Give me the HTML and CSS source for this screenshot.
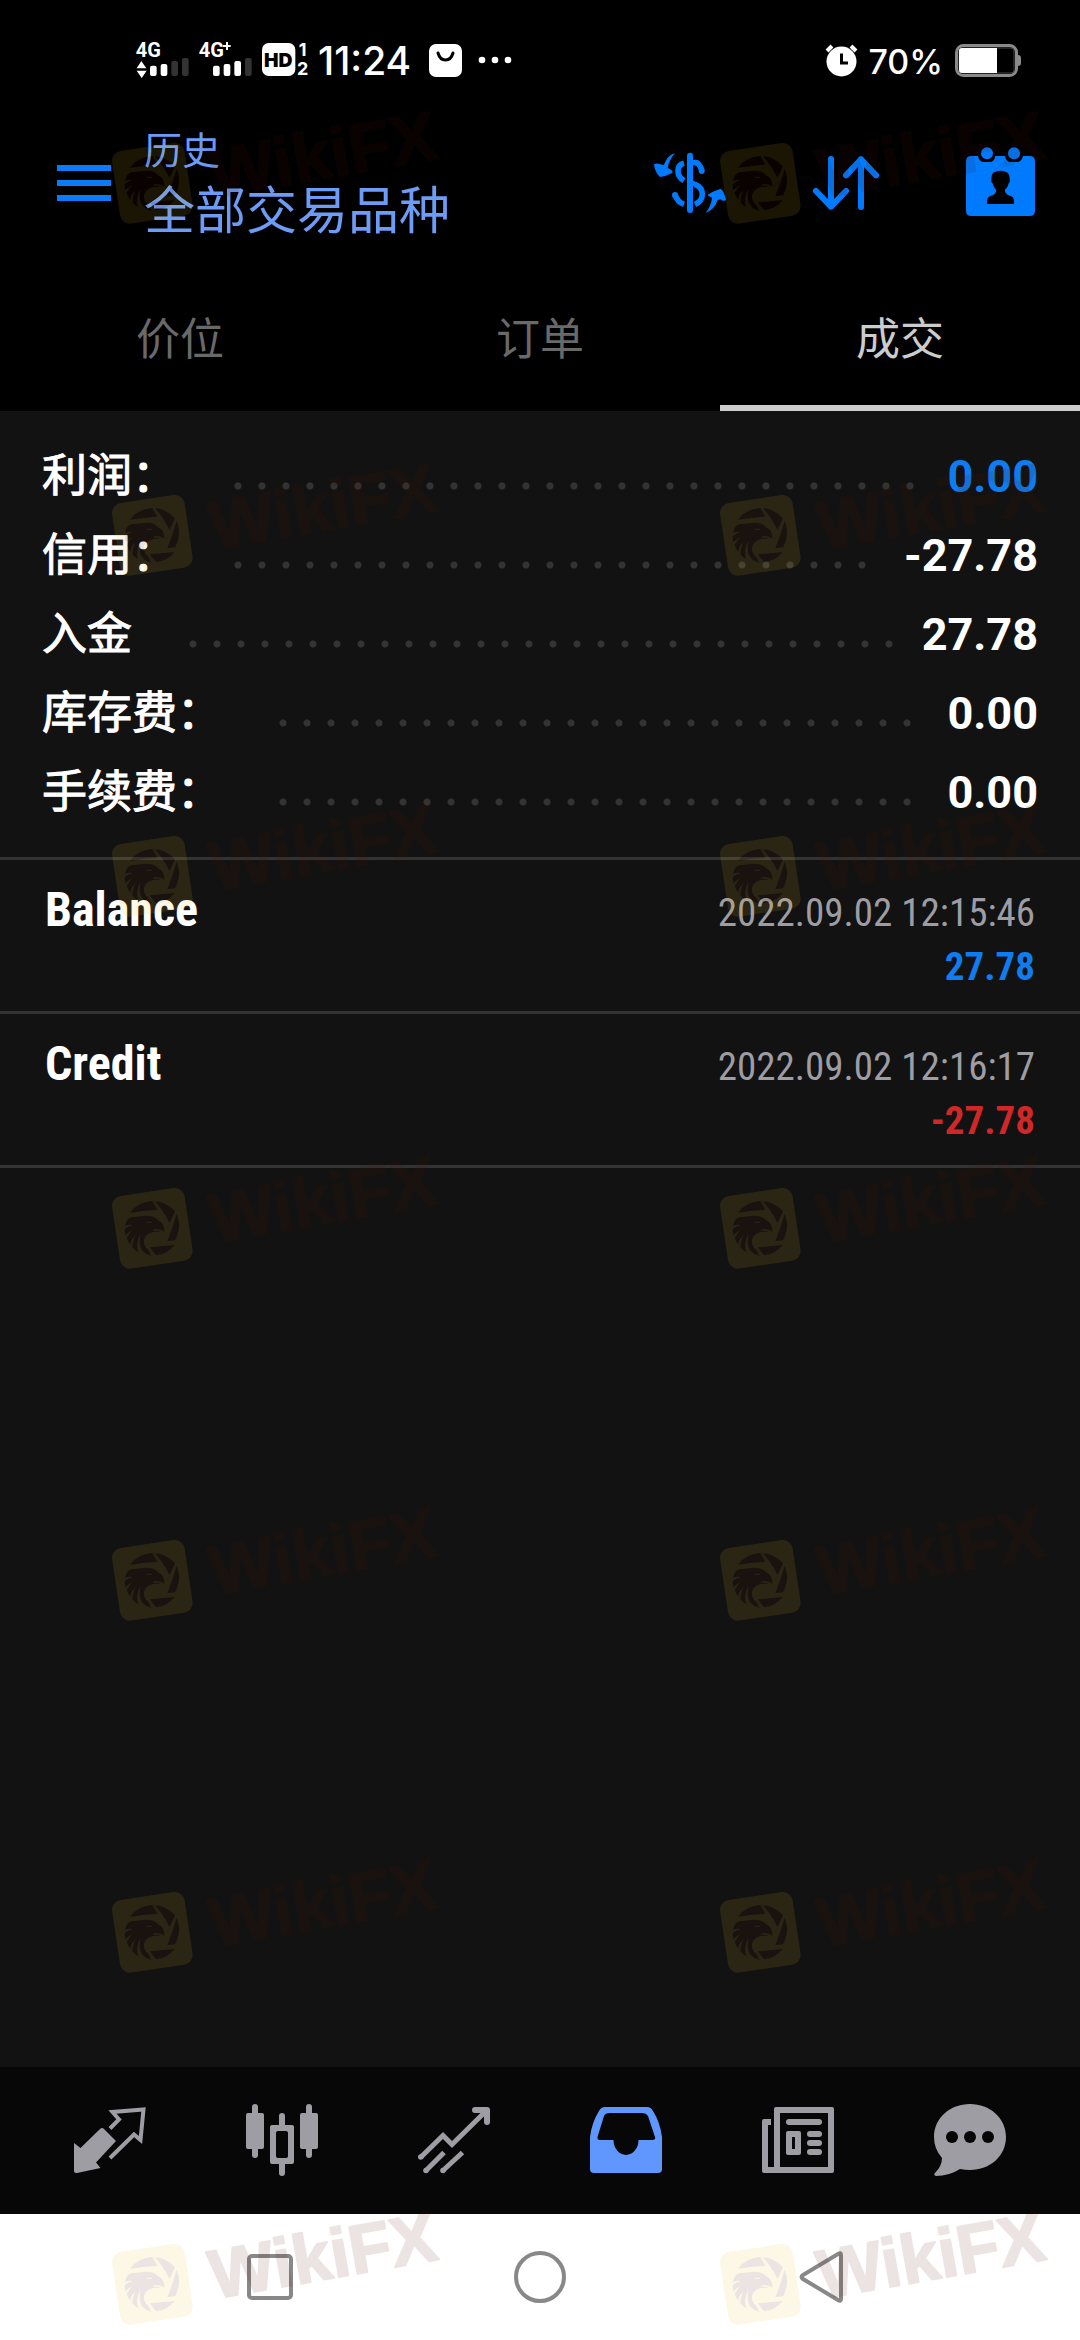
FILE: index.html
```html
<!DOCTYPE html>
<html lang="zh-CN">
<head>
<meta charset="utf-8">
<meta name="viewport" content="width=device-width, initial-scale=1">
<title>历史</title>
<link rel="stylesheet" href="styles.css">
</head>
<body>
<svg class="defs" aria-hidden="true">
  <symbol id="brand" viewBox="0 0 336 132">
    <g opacity=".11">
      <g transform="translate(-12 5) scale(.3333)">
        <rect x="47" y="113" width="220" height="220" rx="30" fill="#f0c028" transform="rotate(-8.5 157 223)"/>
        <g fill="#501400">
          <path d="M90 176Q113 144 157 141L172 167Q130 170 90 176Z"/>
          <path d="M165 141Q204 146 225 172L209 206Q190 170 165 141Z"/>
          <path d="M230 180Q243 212 233 240L226 258L202 262Q218 222 230 180Z"/>
          <path d="M149 280L224 273Q204 300 168 304Z"/>
          <path fill-rule="evenodd" d="M75 216Q80 192 95 190L140 185Q164 185 173 198Q192 204 194 233Q182 224 168 225Q158 226 160 230Q175 228 184 233Q165 232 153 236Q136 242 132 258Q130 276 145 288L154 305Q130 300 122 280Q116 262 122 240Q106 262 114 294Q104 290 97 280Q98 262 105 246Q90 258 92 274Q83 264 80 252Q88 236 98 228Q83 235 76 244Q74 232 74 226Q85 216 98 213Q84 211 75 216ZM134 202Q142 210 154 206L157 202Q148 206 134 202Z"/>
        </g>
      </g>
      <text class="brand-name" transform="translate(102 94) rotate(-10)">WikiFX</text>
    </g>
  </symbol>
</svg>

<header class="top">
  <div class="status">
    <svg class="status-signal" viewBox="105 45 525 150" fill="#fff">
      <text class="net" x="107" y="110">4G</text>
      <path d="M110 145L124 123L139 145ZM110 152H140L125 174Z"/>
      <rect x="150" y="137" width="20" height="31" rx="6"/><rect x="182" y="132" width="20" height="36" rx="6"/>
      <g fill="#333"><rect x="214" y="123" width="20" height="45" rx="6"/><rect x="246" y="114" width="20" height="54" rx="6"/></g>
      <text class="net" x="296" y="110">4G</text>
      <path d="M378 66h6v9h8v6h-8v9h-6v-9h-9v-6h9z"/>
      <rect x="339" y="137" width="20" height="31" rx="6"/><rect x="371" y="132" width="20" height="36" rx="6"/><rect x="403" y="123" width="20" height="45" rx="6"/>
      <rect x="435" y="114" width="20" height="54" rx="6" fill="#333"/>
      <rect x="486" y="69" width="100" height="99" rx="20"/>
      <text class="hd" x="535" y="140" text-anchor="middle">HD</text>
      <text class="sim" x="608" y="108" text-anchor="middle">1</text>
      <text class="sim" x="608" y="165" text-anchor="middle">2</text>
    </svg>
    <span class="time">11:24</span>
    <svg class="status-mail" viewBox="0 0 33 33"><rect width="33" height="33" rx="7" fill="#fff"/><path d="M9 9Q11 16 16.500 16Q22 16 24 9" fill="none" stroke="#000" stroke-width="3" stroke-linecap="round"/></svg>
    <svg class="status-more" viewBox="0 0 34 8" fill="#fff"><circle cx="4" cy="4" r="3.300"/><circle cx="17" cy="4" r="3.300"/><circle cx="30" cy="4" r="3.300"/></svg>
    <span class="spacer"></span>
    <svg class="status-alarm" viewBox="0 0 33 33"><circle cx="16.500" cy="17.500" r="15" fill="#fff"/><path d="M2 7L7 2M31 7L26 2" stroke="#fff" stroke-width="4"/><path d="M16.500 9.500V19H23" fill="none" stroke="#000" stroke-width="3"/></svg>
    <span class="charge">70%</span>
    <svg class="status-battery" viewBox="0 0 66 33"><rect x="1.500" y="1.500" width="60" height="30" rx="7" fill="none" stroke="#8a8a8a" stroke-width="3"/><path d="M63 11Q66 11 66 14V19Q66 22 63 22Z" fill="#8a8a8a"/><rect x="4" y="4" width="55" height="25" rx="3" fill="none" stroke="#444"/><path d="M7 4H42V29H7Q4 29 4 26V7Q4 4 7 4Z" fill="#fff"/></svg>
  </div>

  <div class="bar">
    <button class="icon-btn" aria-label="菜单"><svg class="menu" viewBox="0 0 54 36" fill="#0a7cf5"><path d="M0 0H54V6H0ZM0 15H54V21H0ZM0 30H54V36H0Z"/></svg></button>
    <div class="heading">
      <span class="kicker">历史</span>
      <h1>全部交易品种</h1>
    </div>
    <div class="actions">
      <button class="icon-btn" aria-label="货币"><svg class="icon" viewBox="162 141 216 216" fill="#007aff">
        <path d="M225 160Q203 164 191 196L178 192Q170 188 162 193Q164 216 180 231Q197 229 218 218Q218 210 203 204Q207 180 225 160Z"/>
        <path d="M316 339Q334 318 336 293L322 286Q332 276 362 266Q373 274 378 300Q369 306 362 298L353 300Q343 330 316 339Z"/>
        <rect x="261" y="158" width="18" height="181" rx="9"/>
        <path d="M252 190Q234 194 234 213Q234 231 252 242M285 187Q299 188 306 213" fill="none" stroke="#007aff" stroke-width="17"/>
        <circle cx="305" cy="213" r="9"/>
        <path d="M285 253Q307 262 307 282Q307 304 285 313M225 284Q232 306 252 313" fill="none" stroke="#007aff" stroke-width="17"/>
        <circle cx="225" cy="285" r="9"/>
        <path d="M275 180L292 180L290 196H275ZM275 240L290 247L290 262L275 256Z"/>
      </svg></button>
      <button class="icon-btn" aria-label="排序"><svg class="icon" viewBox="630 141 216 216" fill="none" stroke="#007aff" stroke-width="18" stroke-linecap="round" stroke-linejoin="round"><path d="M693 177V320M648 273L693 320L738 273M783 321V178M738 226L783 178L828 226"/></svg></button>
      <button class="icon-btn" aria-label="日期"><svg class="icon" viewBox="1098 141 216 216" fill="#007aff">
        <path d="M1114 168H1134Q1138 186 1151 186H1170Q1182 186 1186 168H1215Q1219 186 1232 186H1251Q1264 186 1269 168H1289Q1305 168 1305 184V332Q1305 348 1289 348H1114Q1098 348 1098 332V184Q1098 168 1114 168Z"/>
        <circle cx="1161" cy="160" r="18"/><circle cx="1242" cy="160" r="18"/>
        <path fill="#000" d="M1161 312V300Q1163 290 1178 286Q1190 280 1188 269Q1180 262 1178 250Q1172 246 1174 236Q1174 218 1186 215Q1202 209 1217 215Q1229 219 1229 236Q1231 246 1226 250Q1224 262 1215 269Q1214 280 1226 286Q1241 290 1242 300V312Z"/>
      </svg></button>
    </div>
  </div>

  <nav class="tabs">
    <button class="tab">价位</button>
    <button class="tab">订单</button>
    <button class="tab active" aria-current="page">成交</button>
  </nav>
</header>

<main>
  <dl class="summary">
    <div class="line"><dt>利润：</dt><dd class="dots"></dd><dd class="sum blue">0.00</dd></div>
    <div class="line"><dt>信用：</dt><dd class="dots"></dd><dd class="sum">-27.78</dd></div>
    <div class="line"><dt>入金</dt><dd class="dots"></dd><dd class="sum">27.78</dd></div>
    <div class="line"><dt>库存费：</dt><dd class="dots"></dd><dd class="sum">0.00</dd></div>
    <div class="line"><dt>手续费：</dt><dd class="dots"></dd><dd class="sum">0.00</dd></div>
  </dl>
  <ul class="deals">
    <li class="deal"><span class="kind">Balance</span><time>2022.09.02 12:15:46</time><span class="amount blue">27.78</span></li>
    <li class="deal"><span class="kind">Credit</span><time>2022.09.02 12:16:17</time><span class="amount red">-27.78</span></li>
  </ul>
</main>

<nav class="bottom">
  <button class="icon-btn" aria-label="行情"><svg class="icon" viewBox="0 0 72 72" fill="#9d9da3"><path d="M0 39L6.500 44L26 25Q28 23 30 25L42 37L22 58.500L26.500 64L3 69Q0 69 0 67Z"/><path d="M36 24.500L45 15.500L38.500 8L69.500 5.500L66.500 36L60 30.500L36 54" fill="none" stroke="#9d9da3" stroke-width="4"/></svg></button>
  <button class="icon-btn" aria-label="图表"><svg class="icon" viewBox="0 0 72 72" fill="#9d9da3"><rect y="9" width="18" height="36" rx="2"/><rect x="6" width="6" height="54" rx="3"/><rect x="54" y="9" width="18" height="36" rx="2"/><rect x="60" width="6" height="54" rx="3"/><path d="M33 21V12Q33 9 36 9T39 12V21H46Q48 21 48 23V58Q48 60 46 60H39V69Q39 72 36 72T33 69V60H26Q24 60 24 58V23Q24 21 26 21ZM32 27Q30 27 30 29V52Q30 54 32 54H40Q42 54 42 52V29Q42 27 40 27Z" fill-rule="evenodd"/></svg></button>
  <button class="icon-btn" aria-label="交易"><svg class="icon" viewBox="0 0 72 72" fill="none" stroke="#9d9da3" stroke-width="5"><path d="M3 53L25 31.500L34 40.500L69 6"/><path d="M57 6H69V18" stroke-width="6" stroke-linecap="round" stroke-linejoin="round"/><path d="M8 66.500L26 48.500M25 66.500L44.500 48.500"/><g fill="#9d9da3" stroke="none"><circle cx="2.800" cy="53" r="2.800"/><circle cx="8" cy="66.500" r="2.800"/><circle cx="25" cy="66.500" r="2.800"/></g></svg></button>
  <button class="icon-btn" aria-label="历史" aria-current="page"><svg class="icon" viewBox="0 0 72 72" fill="#5f97ff"><path fill-rule="evenodd" d="M0 33Q2 18 9 7Q11 3 15 3H57Q61 3 63 7Q70 18 72 33V65Q72 69 68 69H4Q0 69 0 65ZM20 9Q15 9 14 12L7.500 33Q7 36 10 36H23.500A12.500 15 0 0 0 48.500 36H62Q66 36 65 33L58 12Q56 9 52 9Z"/></svg></button>
  <button class="icon-btn" aria-label="新闻"><svg class="icon" viewBox="0 0 72 72" fill="#9d9da3"><path fill-rule="evenodd" d="M14 3H70Q72 3 72 5V67Q72 69 70 69H2Q0 69 0 67V17Q0 15 2 15H9V21H6V63H12V5Q12 3 14 3ZM18 9V63H66V9ZM26 27H37Q39 27 39 29V49Q39 51 37 51H26Q24 51 24 49V29Q24 27 26 27ZM30 33V45H33V33Z"/><rect x="24" y="15" width="36" height="6" rx="3"/><rect x="45" y="27" width="15" height="6" rx="3"/><rect x="45" y="36" width="15" height="6" rx="3"/><rect x="45" y="45" width="15" height="6" rx="3"/></svg></button>
  <button class="icon-btn" aria-label="消息"><svg class="icon" viewBox="0 0 72 72" fill="#9d9da3"><path d="M36 0C56 0 72 14 72 33S56 66 36 66Q31 66 26 65Q15 72 2 72Q-1 71 1 69Q8 62 8 54Q0 45 0 33C0 14 16 0 36 0Z"/><g fill="#070707"><circle cx="18" cy="33" r="6"/><circle cx="36" cy="33" r="6"/><circle cx="54" cy="33" r="6"/></g></svg></button>
</nav>

<nav class="system">
  <button class="icon-btn" aria-label="最近"><svg class="key" viewBox="0 0 54 54"><rect x="6" y="6" width="42" height="42" rx="3"/></svg></button>
  <button class="icon-btn" aria-label="主页"><svg class="key" viewBox="0 0 54 54"><circle cx="27" cy="27" r="24"/></svg></button>
  <button class="icon-btn" aria-label="返回"><svg class="key" viewBox="-14 0 54 54"><path d="M6 25L41 4Q44 2 44 5V49Q44 52 41 50L6 29Q3 27 6 25Z"/></svg></button>
</nav>

<div class="watermark" aria-hidden="true">
  <div class="mark-row"><svg><use href="#brand"/></svg><svg><use href="#brand"/></svg></div>
  <div class="mark-row short"><svg><use href="#brand"/></svg><svg><use href="#brand"/></svg></div>
  <div class="mark-row"><svg><use href="#brand"/></svg><svg><use href="#brand"/></svg></div>
  <div class="mark-row"><svg><use href="#brand"/></svg><svg><use href="#brand"/></svg></div>
  <div class="mark-row"><svg><use href="#brand"/></svg><svg><use href="#brand"/></svg></div>
  <div class="mark-row"><svg><use href="#brand"/></svg><svg><use href="#brand"/></svg></div>
  <div class="mark-row"><svg><use href="#brand"/></svg><svg><use href="#brand"/></svg></div>
</div>
</body>
</html>
```
FILE: styles.css
```css
* {
  box-sizing: border-box;
}

body {
  position: relative;
  display: flex;
  flex-direction: column;
  min-height: 100vh;
  margin: 0;
  background: #121212;
  color: #fff;
  font-family: Roboto, "Noto Sans CJK SC", sans-serif;
}

h1, dl, dd, ul {
  margin: 0;
  padding: 0;
}

ul {
  list-style: none;
}

button {
  margin: 0;
  padding: 0;
  border: 0;
  background: none;
  color: inherit;
  font: inherit;
}

svg {
  display: block;
  flex: none;
}

.defs {
  position: absolute;
  width: 0;
  height: 0;
}

.icon {
  width: 72px;
  height: 72px;
}

.top {
  background: #000;
}

/* status bar */
.status {
  display: flex;
  align-items: center;
  height: 120px;
  padding: 0 59px 0 135px;
  font-family: Inter, sans-serif;
  font-weight: 500;
}

.status-signal {
  width: 175px;
  height: 50px;
  overflow: visible;
}

.net {
  font: 700 60px Roboto, sans-serif;
}

.hd {
  font: 900 58px Inter, sans-serif;
  fill: #000;
}

.sim {
  font: 700 54px Inter, sans-serif;
}

.time {
  margin-left: 8px;
  font-size: 39px;
}

.status-mail {
  width: 33px;
  height: 33px;
  margin-left: 18px;
}

.status-more {
  width: 34px;
  height: 8px;
  margin-left: 16px;
}

.spacer {
  flex: 1;
}

.status-alarm {
  width: 33px;
  height: 33px;
}

.charge {
  margin: 2px 12px 0 10px;
  font-size: 34px;
}

.status-battery {
  width: 66px;
  height: 33px;
}

/* title bar */
.bar {
  display: flex;
  align-items: center;
  height: 126px;
  padding: 0 42px 0 57px;
}

.menu {
  width: 54px;
  height: 36px;
}

.heading {
  flex: 1;
  margin-left: 33px;
  padding-top: 4px;
  color: #6c9cf5;
}

.kicker {
  display: block;
  font-size: 38px;
  line-height: 54px;
}

h1 {
  font-size: 51px;
  font-weight: 400;
  line-height: 68px;
}

.actions {
  display: flex;
  gap: 84px;
}

.tabs {
  display: flex;
  height: 165px;
}

.tab {
  flex: 1;
  padding-top: 20px;
  border-bottom: 6px solid transparent;
  color: #696969;
  font-size: 44px;
}

.tab.active {
  border-color: #ccc;
  color: #ccc;
}

/* totals */
main {
  flex: 1;
}

.summary {
  padding: 24px 42px 27px;
}

.line {
  display: flex;
  align-items: center;
  height: 79px;
  font-size: 45px;
}

dt {
  padding-bottom: 4px;
  -webkit-text-stroke: 1px currentColor;
}

.dots {
  flex: 1;
  height: 8px;
  margin: 23px 26px 0 57px;
  background: radial-gradient(circle at 4px 4px, #333 3px, transparent 4px) 0 0 / 24px 8px repeat-x;
}

.sum {
  padding-top: 4px;
  font-weight: 700;
}

/* deals */
.deals {
  border-top: 3px solid #333;
}

.deal {
  display: grid;
  grid-template-columns: 1fr auto;
  grid-auto-rows: 55px;
  row-gap: 3px;
  align-items: baseline;
  height: 154px;
  padding: 22px 45px 0;
  border-bottom: 3px solid #333;
  font-family: "Roboto Condensed", Roboto, sans-serif;
  font-size: 39px;
  line-height: 55px;
}

.kind {
  font-size: 48px;
  font-weight: 700;
}

time {
  color: #9d9da3;
}

.amount {
  grid-column: 2;
  font-weight: 700;
  text-align: right;
}

.blue {
  color: #0f7cf0;
}

.red {
  color: #d02828;
}

/* app navigation */
.bottom {
  display: grid;
  grid-template-columns: repeat(6, 1fr);
  justify-items: center;
  align-items: center;
  height: 147px;
  padding: 0 24px 2px;
  background: #070707;
}

/* system keys */
.system {
  display: grid;
  grid-template-columns: repeat(3, 1fr);
  justify-items: center;
  align-items: center;
  height: 126px;
  padding: 0 12.5%;
  background: #fff;
}

.key {
  width: 54px;
  height: 54px;
  overflow: visible;
  fill: none;
  stroke: #888;
  stroke-width: 4px;
}

/* brand overlay */
.watermark {
  position: absolute;
  inset: 104px 0 0 112px;
  overflow: hidden;
  pointer-events: none;
}

.mark-row {
  display: flex;
  gap: 272px;
  height: 352px;
}

.mark-row.short {
  height: 341px;
}

.mark-row svg {
  width: 336px;
  height: 132px;
}

.brand-name {
  font: 700 69px "Liberation Sans", sans-serif;
  fill: #501400;
  stroke: #501400;
  stroke-width: 2px;
  stroke-linejoin: round;
}
```
